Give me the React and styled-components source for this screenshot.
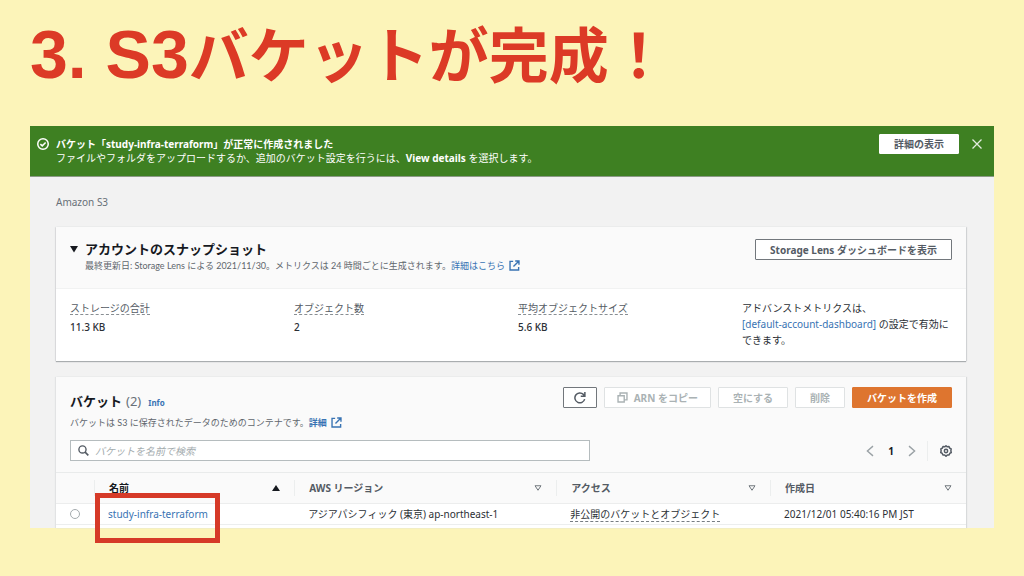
import React from "react";
import styled, { createGlobalStyle, css } from "styled-components";

const GlobalStyle = createGlobalStyle`
  *, *::before, *::after { box-sizing: border-box; }
  body {
    margin: 0;
    background: #fcf4b9;
    color: #2b2f35;
    font-family: "Noto Sans", "Noto Sans CJK JP", sans-serif;
    font-size: 10px;
    line-height: 16px;
  }
  button, input { font: inherit; margin: 0; }
  h1, h2, p, dl, dd { margin: 0; }
  svg { display: block; flex: none; }
`;

const Slide = styled.div`
  min-height: 100vh;
  padding: 0 30px 48px;
`;

const SlideTitle = styled.h1`
  height: 126px;
  padding-top: 11px;
  color: #dc3a26;
  font-family: "Noto Sans CJK JP", sans-serif;
  font-size: 60px;
  font-weight: 700;
  line-height: 82px;
  white-space: nowrap;
`;

const Numbering = styled.span`
  font-family: "Liberation Sans", sans-serif;
  font-size: 68px;
`;

const Console = styled.div`
  background: #f2f2f2;
`;

const Banner = styled.div`
  display: flex;
  align-items: flex-start;
  height: 51px;
  padding: 8px 11px 0 7px;
  background: #3e8022;
  border-bottom: 1px solid #8b9a86;
  color: #fff;
`;

const BannerText = styled.div`
  flex: 1;
  padding: 3px 0 0 7px;
  line-height: 14px;
`;

const BannerIcon = styled.span`
  padding-top: 4px;
`;

const tones = {
  normal: css`background: #fff; border-color: #72777c; color: #545b64;`,
  plain: css`background: #fff; border-color: #fff; color: #545b64;`,
  disabled: css`background: #fff; border-color: #dfe2e3; color: #aab2b4;`,
  primary: css`background: #de752f; border-color: #de752f; color: #fff;`,
};

const Button = styled.button`
  display: inline-flex;
  align-items: center;
  justify-content: center;
  gap: 6px;
  height: ${(p) => (p.$tone === "plain" ? 20 : 21)}px;
  padding: 0 ${(p) => p.$pad || 14}px;
  border: 1px solid;
  border-radius: 1px;
  font-weight: 700;
  line-height: 18px;
  white-space: nowrap;
  ${(p) => tones[p.$tone || "normal"]}
`;

const IconButton = styled.button`
  display: inline-flex;
  align-items: center;
  justify-content: center;
  width: 12px;
  height: 20px;
  padding: 0;
  border: 0;
  background: none;
  color: ${(p) => p.$color || "#545b64"};
`;

const DismissButton = styled(IconButton)`
  margin-left: 12px;
`;

const Content = styled.main`
  padding: 16px 28px 0 26px;
`;

const Crumbs = styled.nav`
  height: 34px;
  line-height: 18px;
  a { color: #687078; text-decoration: none; }
`;

const Card = styled.section`
  margin-bottom: ${(p) => (p.$last ? 0 : 16)}px;
  background: #fff;
  box-shadow: ${(p) => (p.$last ? "" : "0 1px 1px #a9adaf, ")}1px 0 1px #d8dadb, -1px 0 1px #e2e3e4;
`;

const CardHeader = styled.header`
  display: flex;
  justify-content: space-between;
  align-items: flex-start;
  padding: 12px 14px 0;
  background: #fafafa;
`;

const SnapshotHeader = styled(CardHeader)`
  height: 62px;
  border-bottom: 1px solid #f1f2f2;
`;

const SnapshotHeading = styled.div`
  display: flex;
  gap: 8px;
`;

const ToggleButton = styled(IconButton)`
  width: 7px;
  color: #16191f;
`;

const CardTitle = styled.h2`
  color: #16191f;
  font-size: 13px;
  font-weight: 700;
  line-height: 20px;
`;

const Count = styled.span`
  margin-left: 4px;
  color: #687078;
  font-weight: 400;
`;

const InfoLink = styled.a`
  margin-left: 7px;
  color: #3873b3;
  font-size: 8px;
  font-weight: 700;
  text-decoration: none;
`;

const Description = styled.p`
  display: flex;
  align-items: center;
  color: #5f666d;
  font-family: Lato, "Noto Sans CJK JP", sans-serif;
  font-size: 9px;
  line-height: 13px;
  white-space: nowrap;
`;

const BucketDescription = styled(Description)`
  margin-top: 3px;
`;

const Link = styled.a`
  display: ${(p) => (p.$icon ? "inline-flex" : "inline")};
  align-items: center;
  gap: 4px;
  color: #3873b3;
  font-weight: ${(p) => (p.$bold ? 700 : 400)};
  text-decoration: none;
  white-space: nowrap;
`;

const Metrics = styled.dl`
  display: grid;
  grid-template-columns: repeat(4, 1fr);
  gap: 14px;
  padding: 11px 14px 13px;
`;

const MetricLabel = styled.dt`
  width: fit-content;
  height: 15px;
  margin-bottom: 5px;
  border-bottom: 1px dashed #888e93;
  color: #545b64;
`;

const MetricValue = styled.dd`
  line-height: 14px;
  font-weight: 500;
`;

const Actions = styled.div`
  display: flex;
  gap: 7px;
`;

const BucketHeader = styled(CardHeader)`
  padding-top: 10px;
  height: 63px;
`;

const BucketTitles = styled.div`
  padding-top: 4px;
`;

const Tools = styled.div`
  display: flex;
  align-items: center;
  justify-content: space-between;
  height: 32px;
  padding: 0 14px 11px;
  background: #fafafa;
`;

const SearchBox = styled.label`
  display: flex;
  align-items: center;
  gap: 6px;
  width: 59%;
  height: 21px;
  padding: 0 7px;
  border: 1px solid #b5bcbe;
  background: #fff;
  color: #545b64;
`;

const SearchInput = styled.input`
  flex: 1;
  min-width: 0;
  padding: 0;
  border: 0;
  outline: 0;
  background: none;
  &::placeholder { color: #a3abae; font-style: italic; opacity: 1; }
`;

const Pager = styled.div`
  display: flex;
  align-items: center;
`;

const PageButton = styled.button`
  width: 30px;
  padding: 0;
  border: 0;
  background: none;
  color: #16191f;
  font-weight: 700;
`;

const Settings = styled.div`
  display: flex;
  margin-left: 9px;
  padding-left: 12px;
  border-left: 1px solid #eceeee;
`;

const Table = styled.table`
  width: 100%;
  border-collapse: separate;
  border-spacing: 0;
  table-layout: fixed;
  text-align: left;
`;

const Col = styled.col`
  width: ${(p) => p.$width};
`;

const HeadCell = styled.th`
  height: 32px;
  padding: 0;
  border-top: 1px solid #e9ebeb;
  border-bottom: 1px solid #eceded;
  background: #fafafa;
  color: ${(p) => (p.$sorted ? "#16191f" : "#545b64")};
  font-weight: 700;
`;

const HeadInner = styled.div`
  display: flex;
  align-items: center;
  justify-content: space-between;
  height: 16px;
  padding: 0 14px;
  border-left: 1px solid #eceeee;
`;

const SortButton = styled.button`
  display: flex;
  padding: 0;
  border: 0;
  background: none;
  color: ${(p) => (p.$sorted ? "#16191f" : "#70777d")};
`;

const Cell = styled.td`
  position: relative;
  height: 21px;
  padding: 0 14px;
  border-bottom: 1px solid #eceeee;
  white-space: nowrap;
`;

const Radio = styled.input`
  display: block;
  appearance: none;
  width: 10px;
  height: 10px;
  border: 1px solid #a4abae;
  border-radius: 50%;
  background: #fff;
`;

const Access = styled.span`
  display: inline-block;
  height: 16px;
  border-bottom: 1px dashed #777d82;
  line-height: 16px;
  vertical-align: top;
`;

const TableFoot = styled.div`
  height: 3px;
`;

const Highlight = styled.span`
  position: absolute;
  top: -11px;
  left: 1px;
  width: 125px;
  height: 50px;
  border: 5px solid #d63a28;
  pointer-events: none;
`;

const Svg = ({ size = 11, children, ...rest }) => (
  <svg width={size} height={size} viewBox="0 0 16 16" fill="none" stroke="currentColor" strokeWidth="2" aria-hidden="true" {...rest}>
    {children}
  </svg>
);

const CheckIcon = () => (
  <Svg size={12}><circle cx="8" cy="8" r="7" /><path d="M4.5 8.2 7 10.5l4.5-4.5" /></Svg>
);
const CloseIcon = () => (
  <Svg size={12} strokeWidth="1.7"><path d="M2 2l12 12M14 2 2 14" /></Svg>
);
const ExternalIcon = () => (
  <Svg><path d="M6 2H1.5v12.5H14V10M9 1.5h5.5V7M14.5 1.5 6.5 9.5" /></Svg>
);
const RefreshIcon = () => (
  <Svg size={12}><path d="M14.2 9.5A6.6 6.6 0 1 1 12.5 3.2L14 5M14.5 0v5.8H9" /></Svg>
);
const CopyIcon = () => (
  <Svg size={11}><path d="M1.5 5.5h9v9h-9zM4.5 5V1.5h10v10H11" /></Svg>
);
const SearchIcon = () => (
  <Svg size={11}><circle cx="6.5" cy="6.5" r="5.2" /><path d="M10.3 10.3 15 15" strokeWidth="2.4" /></Svg>
);
const PrevIcon = () => (
  <Svg size={12} strokeWidth="1.8"><path d="M12 1.5 4.5 8l7.5 6.5" /></Svg>
);
const NextIcon = () => (
  <Svg size={12} strokeWidth="1.8"><path d="M4 1.5 11.5 8 4 14.5" /></Svg>
);
const GearIcon = () => (
  <Svg size={12}>
    <path d="M8 1 9.7 2.4 12 2.1l.9 2.1 2 1.1-.4 2.5L15 10l-2 1.3-.9 2.1-2.3-.1L8 15l-1.8-1.7-2.3.1L3 11.3 1 10l.5-2.2L1.100 5.300l2-1.100.9-2.100 2.300.3z" strokeLinejoin="round" />
    <circle cx="8" cy="8" r="2.2" />
  </Svg>
);
const CaretIcon = () => (
  <Svg size={8} fill="currentColor" stroke="none"><path d="M0 2h16L8 15z" /></Svg>
);
const SortIcon = ({ sorted }) =>
  sorted ? (
    <Svg size={8} fill="currentColor" stroke="none"><path d="M0 14h16L8 2z" /></Svg>
  ) : (
    <Svg size={8}><path d="M2 3.5h12L8 12.5z" /></Svg>
  );

const metrics = [
  ["ストレージの合計", "11.3 KB"],
  ["オブジェクト数", "2"],
  ["平均オブジェクトサイズ", "5.6 KB"],
];
const columns = ["名前", "AWS リージョン", "アクセス", "作成日"];

export default function App() {
  return (
    <Slide>
      <GlobalStyle />
      <SlideTitle><Numbering>3. S3</Numbering>バケットが完成！</SlideTitle>
      <Console>
        <Banner role="status">
          <BannerIcon><CheckIcon /></BannerIcon>
          <BannerText>
            <p><strong>バケット「study-infra-terraform」が正常に作成されました</strong></p>
            <p>ファイルやフォルダをアップロードするか、追加のバケット設定を行うには、<strong>View details</strong> を選択します。</p>
          </BannerText>
          <Button $tone="plain">詳細の表示</Button>
          <DismissButton $color="#e3ecdf" aria-label="閉じる"><CloseIcon /></DismissButton>
        </Banner>

        <Content>
          <Crumbs><a href="#s3">Amazon S3</a></Crumbs>

          <Card>
            <SnapshotHeader>
              <SnapshotHeading>
                <ToggleButton aria-label="折りたたむ"><CaretIcon /></ToggleButton>
                <div>
                  <CardTitle>アカウントのスナップショット</CardTitle>
                  <Description>
                    最終更新日: Storage Lens による 2021/11/30。メトリクスは 24 時間ごとに生成されます。
                    <Link $icon href="#learn">詳細はこちら<ExternalIcon /></Link>
                  </Description>
                </div>
              </SnapshotHeading>
              <Button>Storage Lens ダッシュボードを表示</Button>
            </SnapshotHeader>
            <Metrics>
              {metrics.map(([label, value]) => (
                <div key={label}>
                  <MetricLabel>{label}</MetricLabel>
                  <MetricValue>{value}</MetricValue>
                </div>
              ))}
              <div>
                アドバンストメトリクスは、<br />
                <Link href="#dashboard">[default-account-dashboard]</Link> の設定で有効に<br />
                できます。
              </div>
            </Metrics>
          </Card>

          <Card $last>
            <BucketHeader>
              <BucketTitles>
                <CardTitle>
                  バケット<Count>(2)</Count>
                  <InfoLink href="#info">Info</InfoLink>
                </CardTitle>
                <BucketDescription>
                  バケットは S3 に保存されたデータのためのコンテナです。
                  <Link $icon $bold href="#more">詳細<ExternalIcon /></Link>
                </BucketDescription>
              </BucketTitles>
              <Actions>
                <Button $pad={10} aria-label="更新"><RefreshIcon /></Button>
                <Button $pad={12} $tone="disabled" disabled><CopyIcon />ARN をコピー</Button>
                <Button $tone="disabled" disabled>空にする</Button>
                <Button $tone="disabled" disabled>削除</Button>
                <Button $tone="primary">バケットを作成</Button>
              </Actions>
            </BucketHeader>
            <Tools>
              <SearchBox>
                <SearchIcon />
                <SearchInput type="text" aria-label="バケットを名前で検索" placeholder="バケットを名前で検索" />
              </SearchBox>
              <Pager>
                <IconButton $color="#9aa1a5" aria-label="前へ"><PrevIcon /></IconButton>
                <PageButton>1</PageButton>
                <IconButton $color="#9aa1a5" aria-label="次へ"><NextIcon /></IconButton>
                <Settings><IconButton aria-label="設定"><GearIcon /></IconButton></Settings>
              </Pager>
            </Tools>
            <Table>
              <colgroup>
                <Col $width="38px" />
                <Col $width="22%" />
                <Col $width="28.8%" />
                <Col $width="23.5%" />
                <Col />
              </colgroup>
              <thead>
                <tr>
                  <HeadCell aria-label="選択" />
                  {columns.map((name, i) => (
                    <HeadCell key={name} $sorted={i === 0} scope="col">
                      <HeadInner>
                        {name}
                        <SortButton $sorted={i === 0} aria-label={name + "で並べ替え"}><SortIcon sorted={i === 0} /></SortButton>
                      </HeadInner>
                    </HeadCell>
                  ))}
                </tr>
              </thead>
              <tbody>
                <tr>
                  <Cell><Radio type="radio" name="bucket" aria-label="study-infra-terraform" /></Cell>
                  <Cell><Link href="#bucket">study-infra-terraform</Link><Highlight /></Cell>
                  <Cell>アジアパシフィック (東京) ap-northeast-1</Cell>
                  <Cell><Access>非公開のバケットとオブジェクト</Access></Cell>
                  <Cell>2021/12/01 05:40:16 PM JST</Cell>
                </tr>
              </tbody>
            </Table>
            <TableFoot />
          </Card>
        </Content>
      </Console>
    </Slide>
  );
}
